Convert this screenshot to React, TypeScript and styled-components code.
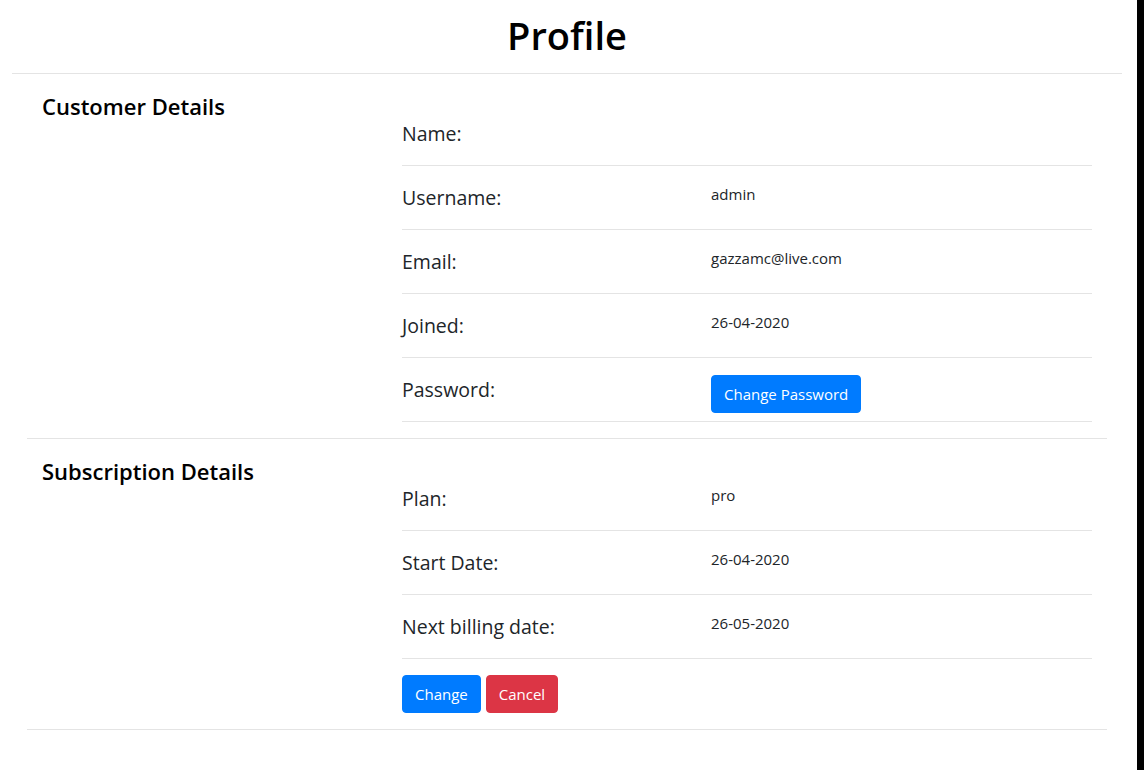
import React from 'react';
import styled, { createGlobalStyle } from 'styled-components';

const GlobalStyle = createGlobalStyle`
  html, body {
    margin: 0;
    padding: 0;
    background: #fff;
  }
  body {
    font-family: 'Open Sans', 'Noto Sans', 'Liberation Sans', sans-serif;
    color: #212529;
  }
`;

type Field = { label: string; value?: string; action?: string };

const customer: Field[] = [
  { label: 'Name:', value: '' },
  { label: 'Username:', value: 'admin' },
  { label: 'Email:', value: 'gazzamc@live.com' },
  { label: 'Joined:', value: '26-04-2020' },
  { label: 'Password:', action: 'Change Password' },
];

const subscription: Field[] = [
  { label: 'Plan:', value: 'pro' },
  { label: 'Start Date:', value: '26-04-2020' },
  { label: 'Next billing date:', value: '26-05-2020' },
];

export default function App() {
  const renderRows = (fields: Field[]) =>
    fields.map((f) => (
      <Row key={f.label}>
        <Label>{f.label}</Label>
        <Value>
          {f.action ? <Button>{f.action}</Button> : f.value}
        </Value>
      </Row>
    ));

  return (
    <Page>
      <GlobalStyle />
      <Main>
        <Header>
          <Title>Profile</Title>
        </Header>
        <Section>
          <SectionTitle>Customer Details</SectionTitle>
          <Details>{renderRows(customer)}</Details>
        </Section>
        <Section>
          <SectionTitle>Subscription Details</SectionTitle>
          <Details>
            {renderRows(subscription)}
            <Actions>
              <Button>Change</Button>
              <Button variant="danger">Cancel</Button>
            </Actions>
          </Details>
        </Section>
      </Main>
      <Strip />
    </Page>
  );
}

const Page = styled.div`
  display: flex;
  min-height: 100vh;
`;

const Main = styled.div`
  flex: 1;
`;

const Strip = styled.div`
  width: 7px;
  background: #000;
`;

const Header = styled.header`
  margin: 0 15px 0 12px;
  padding-top: 11px;
  border-bottom: 1px solid #e4e4e4;
  text-align: center;
`;

const Title = styled.h1`
  margin: 0 0 14px;
  font-size: 38px;
  line-height: 48px;
  font-weight: 600;
  color: #000;
`;

const Section = styled.section`
  display: grid;
  grid-template-columns: 360px 1fr;
  margin: 0 30px 0 27px;
  padding: 18px 15px 16px;
  border-bottom: 1px solid #e4e4e4;
`;

const SectionTitle = styled.h4`
  margin: 0;
  font-size: 22px;
  line-height: 29px;
  font-weight: 600;
  color: #000;
`;

const Details = styled.div`
  padding-top: 10px;
`;

const Row = styled.div`
  display: grid;
  grid-template-columns: 309px 1fr;
  padding: 17px 0 16px;
  border-bottom: 1px solid #e4e4e4;
`;

const Label = styled.div`
  font-size: 19.5px;
  line-height: 30px;
`;

const Value = styled.div`
  height: 30px;
  font-size: 15px;
  line-height: 22px;
`;

const Actions = styled.div`
  display: flex;
  gap: 5px;
  padding-top: 16px;
`;

const Button = styled.button<{ variant?: 'primary' | 'danger' }>`
  height: 38px;
  padding: 0 12px;
  border: 1px solid ${(p) => (p.variant === 'danger' ? '#dc3545' : '#007bff')};
  border-radius: 4px;
  background: ${(p) => (p.variant === 'danger' ? '#dc3545' : '#007bff')};
  color: #fff;
  font-family: inherit;
  font-size: 15px;
  line-height: 24px;
  cursor: pointer;
`;
